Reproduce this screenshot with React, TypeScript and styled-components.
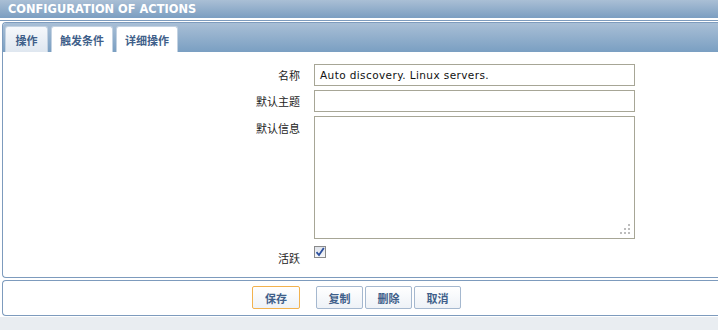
import React from 'react'
import styled, { createGlobalStyle } from 'styled-components'

const Global = createGlobalStyle`
  html, body { margin: 0; padding: 0; background: #fff; }
  body { font-family: "DejaVu Sans", Verdana, "Noto Sans CJK SC", sans-serif; font-size: 11px; color: #222; overflow: hidden; }
  #root { width: 718px; height: 330px; overflow: hidden; }
`

const Page = styled.div`display: flex; flex-direction: column; height: 330px;`

const Header = styled.div`
  height: 18px;
  background: linear-gradient(#aabfd5, #7b9ec1);
  color: #fff;
  font-family: "DejaVu Sans", Verdana, sans-serif;
  font-weight: bold;
  font-size: 11.4px;
  line-height: 18px;
  padding-left: 8px;
`

const Rule = styled.div`height: 1px; background: #7d9bbd; margin: 2px 0 1px;`

const Panel = styled.div`
  margin-left: 2px;
  border: 1px solid #7d9bbd;
  border-right: none;
  border-radius: 4px 0 0 4px;
  overflow: hidden;
  background: #fff;
`

const TabBar = styled.div`
  height: 27px;
  padding: 2px 0 0 2px;
  display: flex;
  align-items: flex-end;
  gap: 3px;
  background: linear-gradient(#a9bfd6, #7a9fc2);
`

const Tab = styled.div<{ $active?: boolean }>`
  height: 26px;
  box-sizing: border-box;
  padding: 0 8px;
  min-width: 43px;
  display: flex;
  align-items: center;
  justify-content: center;
  font-weight: bold;
  font-size: 11px;
  color: #3f5f8a;
  border: 1px solid #c3d2e2;
  border-bottom: none;
  border-radius: 3px 3px 0 0;
  background: ${p => p.$active ? 'linear-gradient(#f6f8fb, #dfe7f0)' : '#fff'};
  font-family: "Noto Sans CJK SC", sans-serif;
`

const Form = styled.div`
  display: grid;
  grid-template-columns: 297px 321px;
  column-gap: 14px;
  row-gap: 4px;
  padding: 12px 0 13px;
`

const Label = styled.div<{ $pad?: number }>`
  text-align: right;
  padding-top: ${p => p.$pad ?? 5}px;
  font-size: 11px;
  line-height: 12px;
  color: #222;
  font-family: "Noto Sans CJK SC", sans-serif;
`

const Input = styled.div`
  height: 22px;
  box-sizing: border-box;
  border: 1px solid #a7a696;
  padding: 0 5px;
  line-height: 20px;
  font-family: "DejaVu Sans", Verdana, sans-serif;
  font-size: 10.5px;
  letter-spacing: 0.4px;
  color: #111;
`

const Area = styled.div`
  position: relative;
  height: 123px;
  box-sizing: border-box;
  border: 1px solid #a7a696;
`

const Grip = styled.svg`position: absolute; right: 4px; bottom: 4px;`

const CheckCell = styled.div`padding-top: 3px; height: 12px;`

const Check = styled.div`
  width: 12px;
  height: 12px;
  box-sizing: border-box;
  border: 1px solid #8a8a8a;
  background: linear-gradient(#dfe3ea, #f6f7f9);
  display: flex;
  align-items: center;
  justify-content: center;
`

const ButtonPanel = styled(Panel)`
  margin-top: 2px;
  display: flex;
  align-items: center;
  padding: 5px 0 6px 249px;
  gap: 16px;
`

const Group = styled.div`display: flex; gap: 2px;`

const Button = styled.div<{ $primary?: boolean }>`
  height: 23px;
  width: ${p => p.$primary ? 48 : 47}px;
  box-sizing: border-box;
  border: 1px solid ${p => p.$primary ? '#f2b24e' : '#a5b8cf'};
  border-radius: 2px;
  background: linear-gradient(#ffffff, #eef2f7);
  display: flex;
  align-items: center;
  justify-content: center;
  font-weight: bold;
  font-size: 11px;
  color: #3f5f8a;
  font-family: "Noto Sans CJK SC", sans-serif;
`

const Footer = styled.div`flex: 1; margin-top: 1px; background: #e9edf1;`

export default function App() {
  return (
    <Page>
      <Global />
      <Header>CONFIGURATION OF ACTIONS</Header>
      <Rule />
      <Panel>
        <TabBar>
          <Tab $active>操作</Tab>
          <Tab>触发条件</Tab>
          <Tab>详细操作</Tab>
        </TabBar>
        <Form>
          <Label>名称</Label>
          <Input>Auto discovery. Linux servers.</Input>
          <Label>默认主题</Label>
          <Input />
          <Label $pad={6}>默认信息</Label>
          <Area>
            <Grip width="10" height="10" viewBox="0 0 10 10">
              <g fill="#bdbdbd">
                <rect x="8" y="0" width="2" height="2" />
                <rect x="4" y="4" width="2" height="2" />
                <rect x="8" y="4" width="2" height="2" />
                <rect x="0" y="8" width="2" height="2" />
                <rect x="4" y="8" width="2" height="2" />
                <rect x="8" y="8" width="2" height="2" />
              </g>
            </Grip>
          </Area>
          <Label $pad={9}>活跃</Label>
          <CheckCell>
            <Check>
              <svg width="10" height="10" viewBox="0 0 10 10">
                <path d="M1.5 5.2 L4 8 L8.8 1" fill="none" stroke="#2b4f9e" strokeWidth="1.8" />
              </svg>
            </Check>
          </CheckCell>
        </Form>
      </Panel>
      <ButtonPanel>
        <Button $primary>保存</Button>
        <Group>
          <Button>复制</Button>
          <Button>删除</Button>
          <Button>取消</Button>
        </Group>
      </ButtonPanel>
      <Footer />
    </Page>
  )
}
